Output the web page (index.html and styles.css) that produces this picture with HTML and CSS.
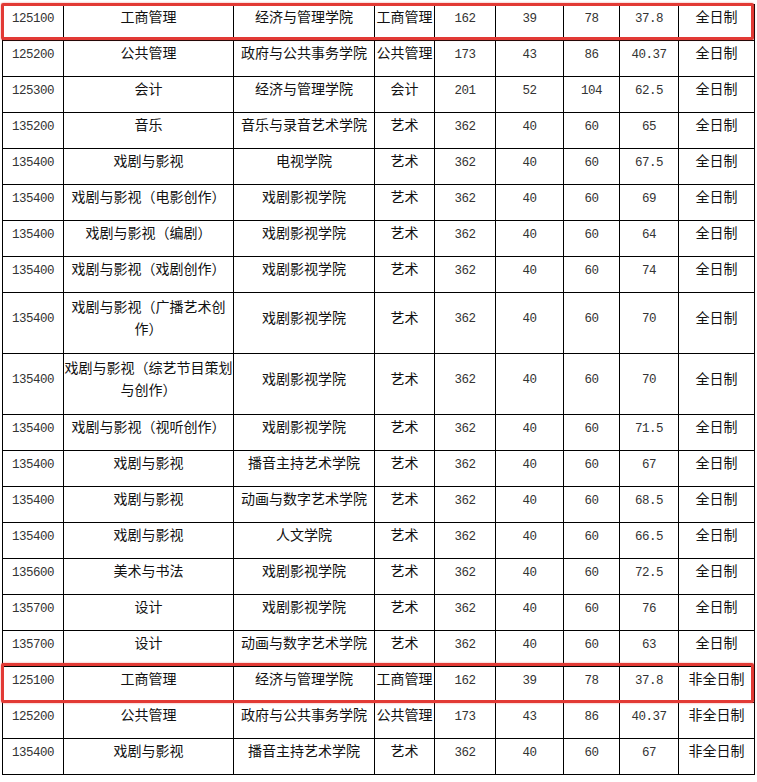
FILE: index.html
```html
<!DOCTYPE html>
<html lang="zh-CN">
<head>
<meta charset="utf-8">
<title>招生复试分数线</title>
<link rel="stylesheet" href="styles.css">
</head>
<body>
<div class="sheet">
  <table class="quota">
    <colgroup>
      <col class="w-code"><col class="w-major"><col class="w-school"><col class="w-cat">
      <col class="w-total"><col class="w-s1"><col class="w-s2"><col class="w-ratio"><col class="w-mode">
    </colgroup>
    <tbody>
      <tr><td class="num">125100</td><td>工商管理</td><td>经济与管理学院</td><td>工商管理</td><td class="num">162</td><td class="num">39</td><td class="num">78</td><td class="num">37.8</td><td>全日制</td></tr>
      <tr><td class="num">125200</td><td>公共管理</td><td>政府与公共事务学院</td><td>公共管理</td><td class="num">173</td><td class="num">43</td><td class="num">86</td><td class="num">40.37</td><td>全日制</td></tr>
      <tr><td class="num">125300</td><td>会计</td><td>经济与管理学院</td><td>会计</td><td class="num">201</td><td class="num">52</td><td class="num">104</td><td class="num">62.5</td><td>全日制</td></tr>
      <tr><td class="num">135200</td><td>音乐</td><td>音乐与录音艺术学院</td><td>艺术</td><td class="num">362</td><td class="num">40</td><td class="num">60</td><td class="num">65</td><td>全日制</td></tr>
      <tr><td class="num">135400</td><td>戏剧与影视</td><td>电视学院</td><td>艺术</td><td class="num">362</td><td class="num">40</td><td class="num">60</td><td class="num">67.5</td><td>全日制</td></tr>
      <tr><td class="num">135400</td><td>戏剧与影视（电影创作）</td><td>戏剧影视学院</td><td>艺术</td><td class="num">362</td><td class="num">40</td><td class="num">60</td><td class="num">69</td><td>全日制</td></tr>
      <tr><td class="num">135400</td><td>戏剧与影视（编剧）</td><td>戏剧影视学院</td><td>艺术</td><td class="num">362</td><td class="num">40</td><td class="num">60</td><td class="num">64</td><td>全日制</td></tr>
      <tr><td class="num">135400</td><td>戏剧与影视（戏剧创作）</td><td>戏剧影视学院</td><td>艺术</td><td class="num">362</td><td class="num">40</td><td class="num">60</td><td class="num">74</td><td>全日制</td></tr>
      <tr class="tall"><td class="num">135400</td><td>戏剧与影视（广播艺术创作）</td><td>戏剧影视学院</td><td>艺术</td><td class="num">362</td><td class="num">40</td><td class="num">60</td><td class="num">70</td><td>全日制</td></tr>
      <tr class="tall"><td class="num">135400</td><td>戏剧与影视（综艺节目策划与创作）</td><td>戏剧影视学院</td><td>艺术</td><td class="num">362</td><td class="num">40</td><td class="num">60</td><td class="num">70</td><td>全日制</td></tr>
      <tr><td class="num">135400</td><td>戏剧与影视（视听创作）</td><td>戏剧影视学院</td><td>艺术</td><td class="num">362</td><td class="num">40</td><td class="num">60</td><td class="num">71.5</td><td>全日制</td></tr>
      <tr><td class="num">135400</td><td>戏剧与影视</td><td>播音主持艺术学院</td><td>艺术</td><td class="num">362</td><td class="num">40</td><td class="num">60</td><td class="num">67</td><td>全日制</td></tr>
      <tr><td class="num">135400</td><td>戏剧与影视</td><td>动画与数字艺术学院</td><td>艺术</td><td class="num">362</td><td class="num">40</td><td class="num">60</td><td class="num">68.5</td><td>全日制</td></tr>
      <tr><td class="num">135400</td><td>戏剧与影视</td><td>人文学院</td><td>艺术</td><td class="num">362</td><td class="num">40</td><td class="num">60</td><td class="num">66.5</td><td>全日制</td></tr>
      <tr><td class="num">135600</td><td>美术与书法</td><td>戏剧影视学院</td><td>艺术</td><td class="num">362</td><td class="num">40</td><td class="num">60</td><td class="num">72.5</td><td>全日制</td></tr>
      <tr><td class="num">135700</td><td>设计</td><td>戏剧影视学院</td><td>艺术</td><td class="num">362</td><td class="num">40</td><td class="num">60</td><td class="num">76</td><td>全日制</td></tr>
      <tr><td class="num">135700</td><td>设计</td><td>动画与数字艺术学院</td><td>艺术</td><td class="num">362</td><td class="num">40</td><td class="num">60</td><td class="num">63</td><td>全日制</td></tr>
      <tr><td class="num">125100</td><td>工商管理</td><td>经济与管理学院</td><td>工商管理</td><td class="num">162</td><td class="num">39</td><td class="num">78</td><td class="num">37.8</td><td>非全日制</td></tr>
      <tr><td class="num">125200</td><td>公共管理</td><td>政府与公共事务学院</td><td>公共管理</td><td class="num">173</td><td class="num">43</td><td class="num">86</td><td class="num">40.37</td><td>非全日制</td></tr>
      <tr><td class="num">135400</td><td>戏剧与影视</td><td>播音主持艺术学院</td><td>艺术</td><td class="num">362</td><td class="num">40</td><td class="num">60</td><td class="num">67</td><td>非全日制</td></tr>
    </tbody>
  </table>
  <div class="mark mark-top"></div>
  <div class="mark mark-bottom"></div>
</div>
</body>
</html>
```
FILE: styles.css
```css
html, body {
  margin: 0;
  background: #fff;
}

.sheet {
  position: relative;
  padding: 4px 0 0 2px;
}

.quota {
  border-collapse: collapse;
  table-layout: fixed;
  width: 753px;
  color: #111;
  font-family: "Noto Sans CJK SC", sans-serif;
  font-size: 14px;
}

.w-code { width: 61px; }
.w-major { width: 170px; }
.w-school { width: 141px; }
.w-cat { width: 60px; }
.w-total { width: 61px; }
.w-s1 { width: 68px; }
.w-s2 { width: 56px; }
.w-ratio { width: 59px; }
.w-mode { width: 76px; }

.quota tr {
  height: 36px;
}

.quota tr.tall {
  height: 61px;
}

.quota td {
  border: 1px solid #000;
  padding: 0 0 13px;
  text-align: center;
  vertical-align: middle;
  line-height: 22px;
  overflow: hidden;
}

.quota td.num {
  padding-bottom: 8px;
  font-family: "Liberation Mono", monospace;
  font-size: 12.5px;
  letter-spacing: -0.5px;
  color: #333;
}

.mark {
  position: absolute;
  left: 1px;
  width: 753px;
  box-sizing: border-box;
  border: 3px solid #e23a35;
  border-radius: 2px;
  box-shadow: 0 0 2px rgba(226, 58, 53, 0.6);
}

.mark-top {
  top: 3px;
  height: 37px;
}

.mark-bottom {
  top: 663px;
  height: 40px;
}
```
